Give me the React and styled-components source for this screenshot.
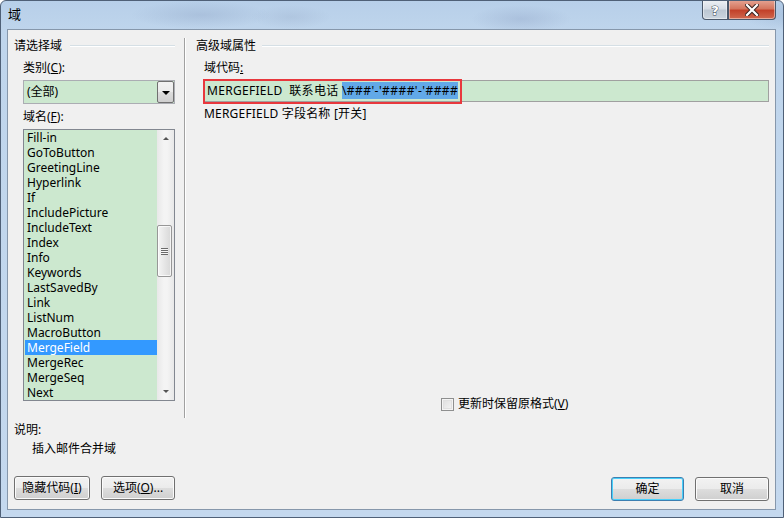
import React from 'react';
import styled, { createGlobalStyle } from 'styled-components';

const FONT = `"Noto Sans", "Noto Sans CJK SC", sans-serif`;

const GlobalStyle = createGlobalStyle`
  html, body { margin: 0; padding: 0; background: #ffffff; }
  body { font-family: ${FONT}; font-size: 12px; color: #000; }
  * { box-sizing: border-box; }
`;

const Window = styled.div`
  width: 784px;
  height: 518px;
  display: flex;
  flex-direction: column;
  border: 1px solid #4f6077;
  border-radius: 6px 6px 0 0;
  overflow: hidden;
  background:
    radial-gradient(ellipse 70px 14px at 200px 14px, rgba(140,162,195,0.35), transparent),
    radial-gradient(ellipse 40px 12px at 290px 16px, rgba(150,170,200,0.3), transparent),
    radial-gradient(ellipse 50px 14px at 520px 18px, rgba(140,160,195,0.35), transparent),
    radial-gradient(ellipse 60px 16px at 800px 14px, rgba(120,150,190,0.3), transparent),
    radial-gradient(ellipse 80px 16px at 930px 18px, rgba(130,155,195,0.3), transparent),
    linear-gradient(to bottom, #b7cfe9 0px, #bfd5ec 30px, #c4d8ee 100%);
`;

const TitleBar = styled.div`
  height: 28px;
  display: flex;
  align-items: flex-start;
  padding: 0 7px 0 7px;
`;

const Title = styled.div`
  font-size: 13px;
  line-height: 18px;
  padding-top: 4px;
`;

const Controls = styled.div`
  margin-left: auto;
  display: flex;
  margin-top: -1px;
`;

const CaptionButton = styled.div`
  height: 20px;
  width: ${p => p.$w}px;
  display: flex;
  align-items: center;
  justify-content: center;
  border: 1px solid #4a586b;
  border-top: none;
  border-radius: ${p => p.$radius};
  background: ${p => p.$close
    ? 'linear-gradient(to bottom, #e6a595 0%, #d5765f 45%, #c2412a 55%, #d0684e 100%)'
    : 'linear-gradient(to bottom, #eef1f5 0%, #d6dde6 45%, #bcc7d3 55%, #cbd5df 100%)'};
  box-shadow: inset 0 0 0 1px rgba(255,255,255,0.45);
`;

const Frame = styled.div`
  flex: 1;
  display: flex;
  padding: 0 7px 7px 6px;
`;

const Client = styled.div`
  flex: 1;
  display: flex;
  flex-direction: column;
  background: #f0f0f0;
  border: 1px solid #8697ab;
`;

const Top = styled.div`
  display: flex;
  height: 388px;
  padding-top: 8px;
`;

const LeftPane = styled.div`
  width: 177px;
  padding: 0 9px 0 6px;
  border-right: 1px solid #a0a0a0;
  box-shadow: 1px 0 0 #ffffff;
  display: flex;
  flex-direction: column;
`;

const RightPane = styled.div`
  flex: 1;
  padding: 0 6px 0 11px;
  display: flex;
  flex-direction: column;
`;

const SectionHeader = styled.div`
  display: flex;
  align-items: center;
  height: 16px;
  line-height: 16px;
  gap: ${p => p.$gap}px;
  white-space: nowrap;
  &::after {
    content: '';
    flex: 1;
    height: 0;
    border-top: 1px solid #d5dfe5;
    border-bottom: 1px solid #ffffff;
  }
`;

const Label = styled.div`
  line-height: 16px;
  height: 16px;
  margin: ${p => p.$mt}px 0 0 ${p => p.$ml}px;
  letter-spacing: ${p => p.$ls || 0}px;
  white-space: nowrap;
`;

const Combo = styled.div`
  margin: 4px 0 0 9px;
  height: 24px;
  border: 1px solid #abadb3;
  background: #cce8cf;
  display: flex;
  align-items: center;
  padding-left: 3px;
`;

const ComboText = styled.div`
  flex: 1;
  line-height: 16px;
`;

const DropButton = styled.div`
  width: 17px;
  height: 22px;
  border: 1px solid #707070;
  border-radius: 2px;
  background: linear-gradient(to bottom, #f2f2f2 0%, #ebebeb 50%, #dddddd 51%, #cfcfcf 100%);
  display: flex;
  align-items: center;
  justify-content: center;
  &::before {
    content: '';
    border-left: 4px solid transparent;
    border-right: 4px solid transparent;
    border-top: 4px solid #000;
    margin-top: 1px;
  }
`;

const ListBox = styled.div`
  margin: 4px 0 0 9px;
  height: 272px;
  border: 1px solid #828790;
  display: flex;
`;

const Items = styled.div`
  flex: 1;
  background: #cce8cf;
  overflow: hidden;
`;

const Item = styled.div`
  height: 15px;
  line-height: 15px;
  padding-left: ${p => (p.$selected ? 2 : 3)}px;
  margin-left: ${p => (p.$selected ? 1 : 0)}px;
  background: ${p => (p.$selected ? '#3399ff' : 'transparent')};
  color: ${p => (p.$selected ? '#ffffff' : '#000000')};
  white-space: nowrap;
`;

const ScrollBar = styled.div`
  width: 17px;
  display: flex;
  flex-direction: column;
  background: linear-gradient(to right, #e8e8e8, #f4f4f4 40%, #f4f4f4 60%, #e8e8e8);
`;

const Arrow = styled.div`
  height: 17px;
  display: flex;
  align-items: center;
  justify-content: center;
  &::before {
    content: '';
    border-left: 3px solid transparent;
    border-right: 3px solid transparent;
    ${p => (p.$up ? 'border-bottom: 3px solid #555;' : 'border-top: 3px solid #555;')}
  }
`;

const Track = styled.div`
  flex: 1;
`;

const Thumb = styled.div`
  margin: ${p => p.$offset}px 1px 0 0;
  height: 52px;
  width: 15px;
  border: 1px solid #979797;
  border-radius: 2px;
  background: linear-gradient(to right, #f5f5f5, #e6e6e6 50%, #d8d8d8);
  box-shadow: inset 0 0 0 1px rgba(255,255,255,0.7);
  display: flex;
  align-items: center;
  justify-content: center;
`;

const Grip = styled.div`
  width: 7px;
  height: 7px;
  background: repeating-linear-gradient(to bottom, #6a6a6a 0px, #6a6a6a 1px, #f6f6f6 1px, #f6f6f6 2px);
`;

const CodeField = styled.div`
  position: relative;
  margin: 4px 0 0 7px;
  height: 22px;
  border: 1px solid #a0a0a0;
  background: #cce8cf;
  padding-left: 3px;
  line-height: 20px;
  letter-spacing: 0.3px;
  white-space: nowrap;
`;

const Selection = styled.span`
  background: #62a9e8;
  letter-spacing: 0.45px;
`;

const Annotation = styled.div`
  position: absolute;
  left: -1px;
  top: -2px;
  width: 259px;
  height: 25px;
  border: 2px solid #e8383d;
  pointer-events: none;
`;

const CheckRow = styled.label`
  margin: auto 0 6px 245px;
  display: flex;
  align-items: center;
  gap: 4px;
  height: 16px;
  line-height: 16px;
  white-space: nowrap;
`;

const CheckBox = styled.span`
  width: 13px;
  height: 13px;
  border: 1px solid #8e8f8f;
  background: linear-gradient(135deg, #dcdcdc, #f6f6f6);
  box-shadow: inset 0 0 0 1px #f4f4f4, inset 0 0 0 2px #e0e0e0;
`;

const Description = styled.div`
  padding: 4px 0 0 6px;
`;

const Line = styled.div`
  line-height: 16px;
  height: 16px;
  margin-top: ${p => p.$mt || 0}px;
  padding-left: ${p => p.$indent || 0}px;
`;

const ButtonRow = styled.div`
  display: flex;
  align-items: flex-start;
  gap: 11px;
  padding: 0 6px;
  margin-top: 19px;
`;

const Button = styled.div`
  width: ${p => p.$w}px;
  height: 24px;
  margin-top: ${p => p.$mt || 0}px;
  margin-left: ${p => (p.$push ? 'auto' : '0')};
  border: 1px solid ${p => (p.$default ? '#3c7fb1' : '#707070')};
  border-radius: 3px;
  background: linear-gradient(to bottom, #f2f2f2 0%, #ebebeb 50%, #dddddd 51%, #cfcfcf 100%);
  box-shadow: inset 0 0 0 1px ${p => (p.$default ? '#48d0fa' : '#fbfbfb')};
  display: flex;
  align-items: center;
  justify-content: center;
  line-height: 16px;
  white-space: nowrap;
`;

const fields = [
  'Fill-in', 'GoToButton', 'GreetingLine', 'Hyperlink', 'If', 'IncludePicture',
  'IncludeText', 'Index', 'Info', 'Keywords', 'LastSavedBy', 'Link', 'ListNum',
  'MacroButton', 'MergeField', 'MergeRec', 'MergeSeq', 'Next',
];

function HelpGlyph() {
  return (
    <svg width="12" height="14" viewBox="0 0 12 14">
      <text x="6" y="12" textAnchor="middle" fontFamily="DejaVu Sans, sans-serif" fontSize="13" fontWeight="bold"
        fill="#ffffff" stroke="#3c4656" strokeWidth="0.9" paintOrder="stroke">?</text>
    </svg>
  );
}

function CloseGlyph() {
  return (
    <svg width="14" height="12" viewBox="0 0 14 12">
      <path d="M2 1 L12 11 M12 1 L2 11" stroke="#3a2320" strokeWidth="4.2" strokeLinecap="square" />
      <path d="M2 1 L12 11 M12 1 L2 11" stroke="#ffffff" strokeWidth="2.2" strokeLinecap="square" />
    </svg>
  );
}

export default function App() {
  return (
    <>
      <GlobalStyle />
      <Window>
        <TitleBar>
          <Title>域</Title>
          <Controls>
            <CaptionButton $w={26} $radius="0 0 0 4px"><HelpGlyph /></CaptionButton>
            <CaptionButton $w={48} $radius="0 0 4px 0" $close><CloseGlyph /></CaptionButton>
          </Controls>
        </TitleBar>
        <Frame>
          <Client>
            <Top>
              <LeftPane>
                <SectionHeader $gap={8}>请选择域</SectionHeader>
                <Label $mt={6} $ml={9}>类别(<u>C</u>):</Label>
                <Combo>
                  <ComboText>(全部)</ComboText>
                  <DropButton />
                </Combo>
                <Label $mt={5} $ml={9}>域名(<u>F</u>):</Label>
                <ListBox>
                  <Items>
                    {fields.map(f => (
                      <Item key={f} $selected={f === 'MergeField'}>{f}</Item>
                    ))}
                  </Items>
                  <ScrollBar>
                    <Arrow $up />
                    <Track>
                      <Thumb $offset={78}><Grip /></Thumb>
                    </Track>
                    <Arrow />
                  </ScrollBar>
                </ListBox>
              </LeftPane>
              <RightPane>
                <SectionHeader $gap={6}>高级域属性</SectionHeader>
                <Label $mt={6} $ml={8}>域代码<u>:</u></Label>
                <CodeField>
                  MERGEFIELD&nbsp;&nbsp;联系电话 <Selection>\###'-'####'-'####</Selection>
                  <Annotation />
                </CodeField>
                <Label $mt={4} $ml={8} $ls={0.2}>MERGEFIELD 字段名称 [开关]</Label>
                <CheckRow>
                  <CheckBox />
                  <span>更新时保留原格式(<u>V</u>)</span>
                </CheckRow>
              </RightPane>
            </Top>
            <Description>
              <Line>说明:</Line>
              <Line $mt={3} $indent={18}>插入邮件合并域</Line>
            </Description>
            <ButtonRow>
              <Button $w={76}>隐藏代码(<u>I</u>)</Button>
              <Button $w={74}>选项(<u>O</u>)...</Button>
              <Button $w={73} $mt={1} $push $default>确定</Button>
              <Button $w={74} $mt={1}>取消</Button>
            </ButtonRow>
          </Client>
        </Frame>
      </Window>
    </>
  );
}
